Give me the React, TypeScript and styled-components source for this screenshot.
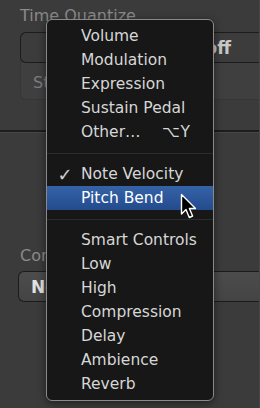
import React from 'react';
import styled, { createGlobalStyle } from 'styled-components';

const GlobalStyle = createGlobalStyle`
  html, body {
    margin: 0;
    padding: 0;
    background: #3b3b3b;
  }
  * {
    box-sizing: border-box;
  }
`;

const Page = styled.div`
  position: relative;
  width: 260px;
  height: 408px;
  overflow: hidden;
  background: #3b3b3b;
  border-right: 1px solid #474747;
  font-family: 'DejaVu Sans', 'Liberation Sans', sans-serif;
`;

const Section = styled.div<{ $pt: number; $h: number }>`
  height: ${p => p.$h}px;
  padding: ${p => p.$pt}px 0 0 20px;
`;

const Label = styled.div`
  font-size: 16px;
  line-height: 18px;
  color: #8a8a8a;
  height: 25px;
`;

const Group = styled.div`
  border-radius: 6px 0 0 6px;
  background: #3f3f3f;
  border: 1px solid #363636;
  border-right: none;
  height: 68px;
`;

const Popup = styled.div<{ $light?: boolean }>`
  display: flex;
  align-items: center;
  justify-content: flex-end;
  height: 31px;
  margin: -1px 0 0 -1px;
  padding-right: 28px;
  border: 1px solid #1c1c1c;
  border-right: none;
  border-radius: 6px 0 0 6px;
  background: ${p => (p.$light ? 'linear-gradient(#4c4c4c, #444)' : '#3c3c3c')};
  font-size: 17px;
  font-weight: bold;
  color: #c9c9c9;
`;

const PopupLeft = styled(Popup)`
  justify-content: flex-start;
  padding-left: 12px;
  margin: -1px 0 0 -2px;
  color: #e2e2e2;
`;

const SubRow = styled.div`
  padding: 10px 0 0 12px;
  font-size: 16px;
  color: #7d7d7d;
`;

const Rule = styled.div`
  height: 3px;
  border-top: 2px solid #1d1d1d;
  border-bottom: 1px solid #464646;
`;

const Menu = styled.div`
  position: absolute;
  left: 46px;
  top: 19px;
  width: 168px;
  padding: 4px 0 4px;
  background: #171717;
  border: 1px solid #8a8a8a;
  border-radius: 6px;
  box-shadow: 0 2px 8px rgba(0, 0, 0, 0.5);
`;

const Item = styled.div<{ $active?: boolean }>`
  display: grid;
  grid-template-columns: 34px 1fr auto;
  align-items: center;
  height: 24px;
  padding-right: 22px;
  font-size: 15.5px;
  color: ${p => (p.$active ? '#ffffff' : '#d6d6d6')};
  background: ${p => (p.$active ? 'linear-gradient(#3563a7, #234b8d)' : 'transparent')};
  white-space: nowrap;
`;

const Check = styled.span`
  text-align: center;
  padding-left: 2px;
  font-size: 18px;
  font-weight: bold;
  color: #cfcfcf;
`;

const Shortcut = styled.span`
  font-size: 15.5px;
  color: #d6d6d6;
  letter-spacing: 1px;
`;

const Separator = styled.div`
  height: 18px;
  display: flex;
  align-items: center;
  &::after {
    content: '';
    flex: 1;
    height: 1px;
    background: #2c2c2c;
  }
`;

const Cursor = styled.svg`
  position: absolute;
  left: 180px;
  top: 193px;
`;

type Entry = { label?: string; check?: boolean; active?: boolean; key?: string };

const ITEMS: Entry[] = [
  { label: 'Volume' },
  { label: 'Modulation' },
  { label: 'Expression' },
  { label: 'Sustain Pedal' },
  { label: 'Other…', key: '⌥Y' },
  {},
  { label: 'Note Velocity', check: true },
  { label: 'Pitch Bend', active: true },
  {},
  { label: 'Smart Controls' },
  { label: 'Low' },
  { label: 'High' },
  { label: 'Compression' },
  { label: 'Delay' },
  { label: 'Ambience' },
  { label: 'Reverb' },
];

export default function App() {
  return (
    <Page>
      <GlobalStyle />
      <Section $pt={7} $h={130}>
        <Label>Time Quantize</Label>
        <Group>
          <Popup>off</Popup>
          <SubRow>Strength</SubRow>
        </Group>
      </Section>
      <Rule />
      <Section $pt={114} $h={275}>
        <Label>Controller</Label>
        <PopupLeft $light>Note Velocity</PopupLeft>
      </Section>

      <Menu>
        {ITEMS.map((it, i) =>
          it.label ? (
            <Item key={i} $active={it.active}>
              <Check>{it.check ? '✓' : ''}</Check>
              <span>{it.label}</span>
              <Shortcut>{it.key ?? ''}</Shortcut>
            </Item>
          ) : (
            <Separator key={i} />
          )
        )}
      </Menu>

      <Cursor width="19" height="27" viewBox="0 0 19 27">
        <path
          d="M1.5 1.5 L1.5 21 L6 16.5 L9.3 24.5 L12.6 23 L9.4 15.5 L15.5 15.5 Z"
          fill="#000"
          stroke="#fff"
          strokeWidth="1.4"
          strokeLinejoin="round"
        />
      </Cursor>
    </Page>
  );
}
